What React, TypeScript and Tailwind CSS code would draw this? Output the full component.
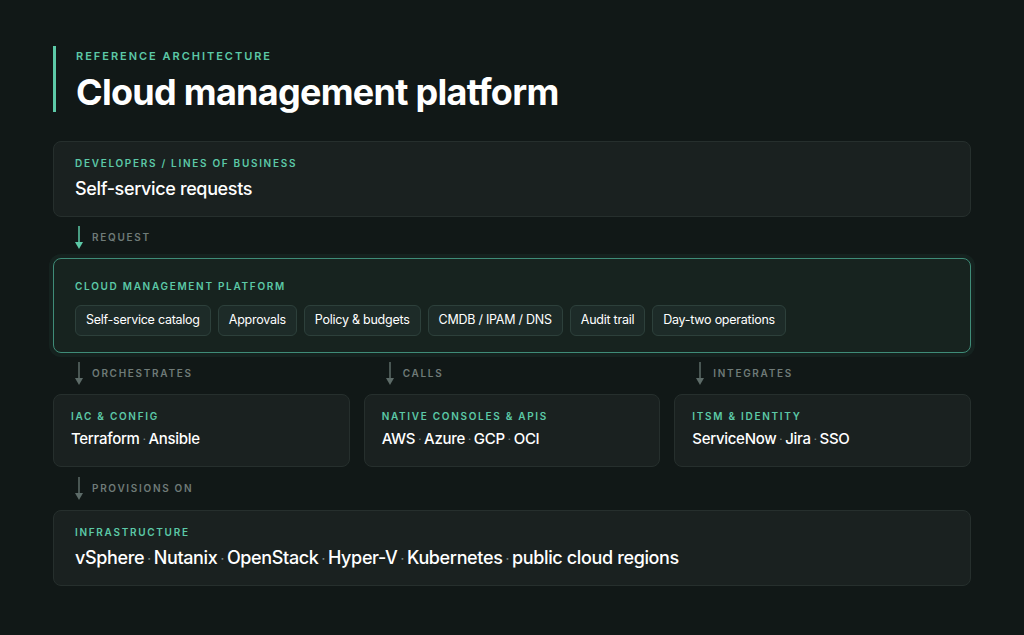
const font = { fontFamily: 'Inter, "Noto Sans", sans-serif' };

function Arrow({ label, teal }: { label: string; teal?: boolean }) {
  return (
    <div className="flex items-center gap-2 h-[25px]">
      <svg width="10" height="25" viewBox="0 0 10 25" className={teal ? 'text-[#5cc9a7]' : 'text-[#5d6b68]'}>
        <path d="M5 1V22" stroke="currentColor" strokeWidth="1.5" />
        <path d="M1 17L5 24L9 17Z" fill="currentColor" />
      </svg>
      <span className="text-[10px] font-semibold tracking-[0.17em] text-[#6f7b78]">{label}</span>
    </div>
  );
}

function Items({ items }: { items: string[] }) {
  return (
    <>
      {items.map((t, i) => (
        <span key={t}>
          {i > 0 && <span className="text-[#7d8986] mx-[3px] text-[0.7em] align-middle">·</span>}
          {t}
        </span>
      ))}
    </>
  );
}

function Card({ label, items, big, pad = 'px-[21px]' }: { label: string; items: string[]; big?: boolean; pad?: string }) {
  return (
    <div className={`rounded-lg border border-[#262f2d] bg-[#1a2120] ${pad} ${big ? 'h-[76px] pt-[14px]' : 'h-[73px] pt-[14px]'}`}>
      <div className="text-[10px] font-semibold tracking-[0.17em] text-[#5cc9a7]">{label}</div>
      <div className={`text-white font-medium tracking-[-0.02em] mt-[4px] ${big ? 'text-[18px]' : 'text-[15px]'}`}>
        <Items items={items} />
      </div>
    </div>
  );
}

const chips = ['Self-service catalog', 'Approvals', 'Policy & budgets', 'CMDB / IPAM / DNS', 'Audit trail', 'Day-two operations'];

export default function App() {
  return (
    <div className="min-h-screen w-full bg-[#111817] pt-[46px] px-[53px]" style={font}>
      <div className="w-[918px]">
        <div className="border-l-[3px] border-[#5cc9a7] pl-[20px] h-[66px] flex flex-col justify-between">
          <div className="text-[11px] font-semibold tracking-[0.18em] text-[#5cc9a7] pt-[2px]">REFERENCE ARCHITECTURE</div>
          <div className="text-[36px] font-bold text-white leading-none tracking-[-0.02em] pb-[2px]">Cloud management platform</div>
        </div>

        <div className="mt-[29px]">
          <Card label="DEVELOPERS / LINES OF BUSINESS" items={['Self-service requests']} big />
        </div>
        <div className="pl-[21px] py-[8px]"><Arrow label="REQUEST" teal /></div>

        <div className="rounded-lg border border-[#3f8c78] bg-[#17231f] px-[21px] pt-[20px] h-[95px] shadow-[0_0_0_4px_rgba(92,201,167,0.06)]">
          <div className="text-[10px] font-semibold tracking-[0.17em] text-[#5cc9a7]">CLOUD MANAGEMENT PLATFORM</div>
          <div className="flex gap-[7px] mt-[11px]">
            {chips.map(c => (
              <div key={c} className="h-[31px] px-[10px] flex items-center rounded-md border border-[#2d403b] bg-[#1d2b28] text-[12.5px] tracking-[-0.02em] text-white">{c}</div>
            ))}
          </div>
        </div>

        <div className="grid grid-cols-3 gap-[14px] py-[8px]">
          <div className="pl-[21px]"><Arrow label="ORCHESTRATES" /></div>
          <div className="pl-[21px]"><Arrow label="CALLS" /></div>
          <div className="pl-[21px]"><Arrow label="INTEGRATES" /></div>
        </div>

        <div className="grid grid-cols-3 gap-[14px]">
          <Card label="IAC & CONFIG" items={['Terraform', 'Ansible']} pad="px-[17px]" />
          <Card label="NATIVE CONSOLES & APIS" items={['AWS', 'Azure', 'GCP', 'OCI']} pad="px-[17px]" />
          <Card label="ITSM & IDENTITY" items={['ServiceNow', 'Jira', 'SSO']} pad="px-[17px]" />
        </div>

        <div className="pl-[21px] py-[9px]"><Arrow label="PROVISIONS ON" /></div>

        <Card label="INFRASTRUCTURE" items={['vSphere', 'Nutanix', 'OpenStack', 'Hyper-V', 'Kubernetes', 'public cloud regions']} big />
      </div>
    </div>
  );
}
